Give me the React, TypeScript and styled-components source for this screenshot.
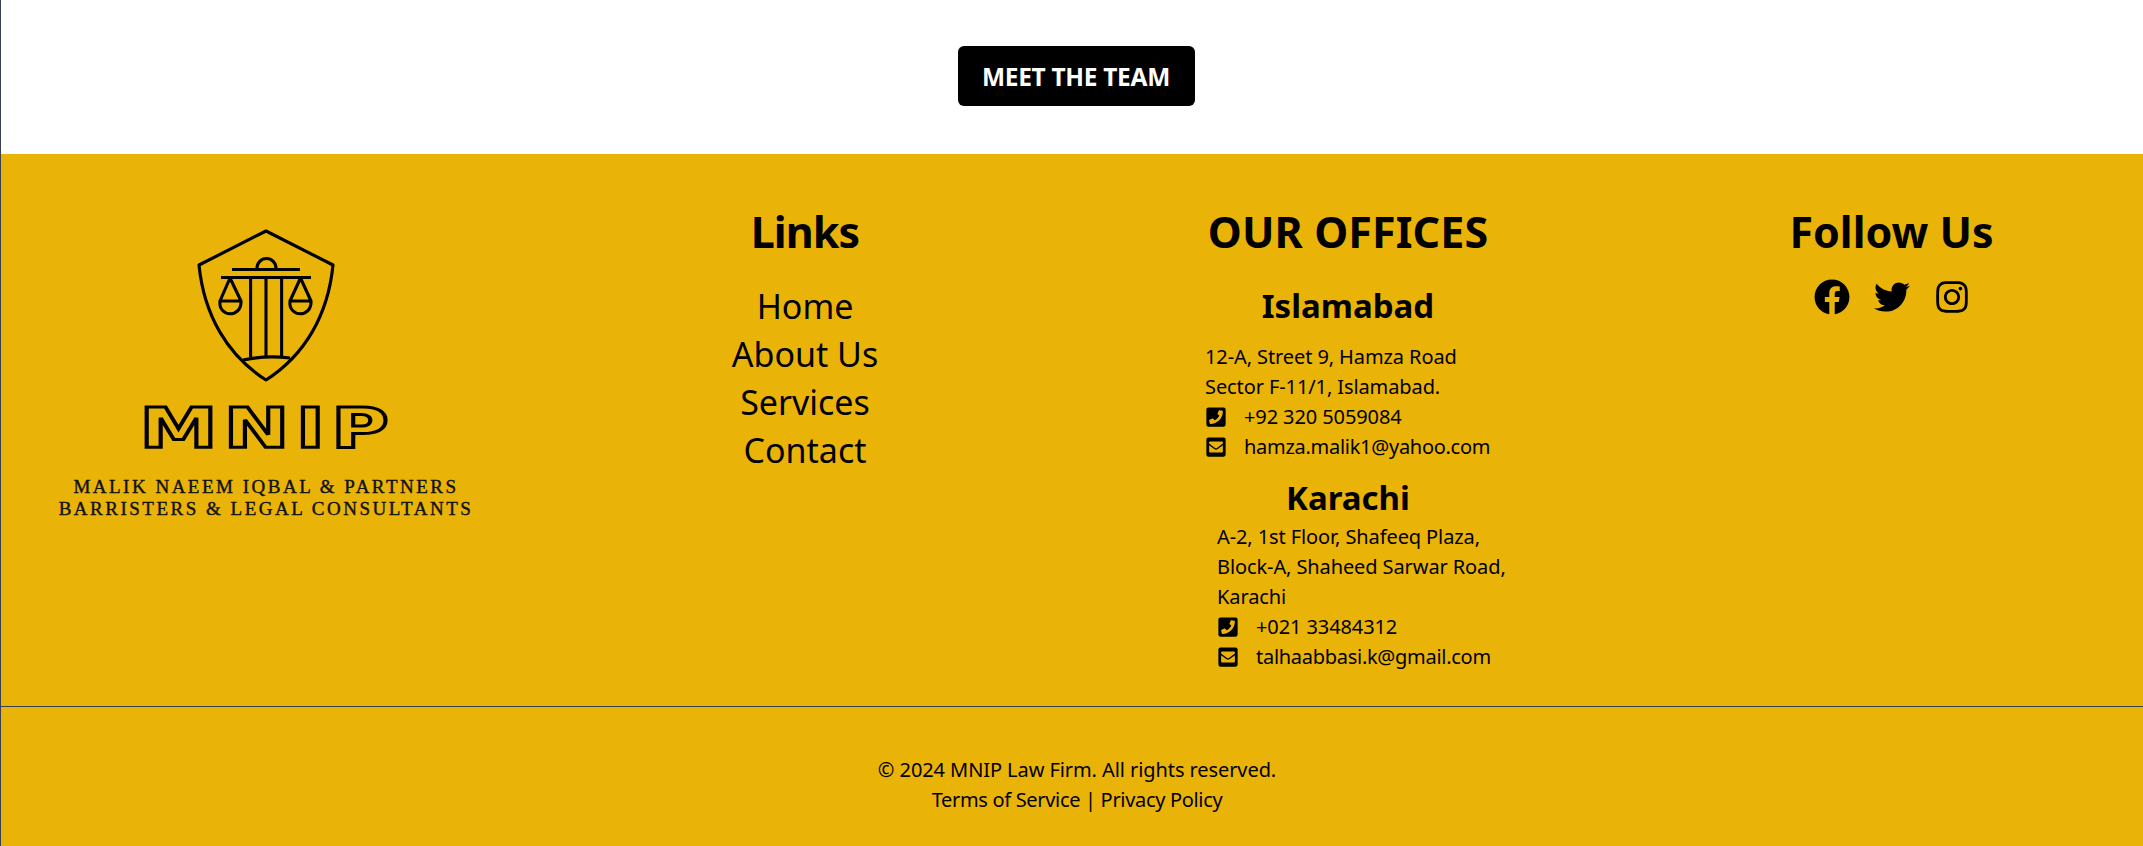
import React from "react";
import styled, { createGlobalStyle } from "styled-components";
import { FaFacebook, FaTwitter, FaInstagram, FaPhoneSquare, FaEnvelopeSquare } from "react-icons/fa";

const Global = createGlobalStyle`
  html, body { margin: 0; padding: 0; background: #fff; }
  body { font-family: "Noto Sans", "Open Sans", Arial, sans-serif; color: #000; }
  * { box-sizing: border-box; }
`;
const Page = styled.div`
  display: flex;
  flex-direction: column;
  border-left: 1px solid #374151;
  height: 846px;
  overflow: hidden;
`;
const TopBand = styled.section`
  display: flex;
  justify-content: center;
  padding: 46px 0 48px 8px;
  background: #fff;
`;
const TeamButton = styled.button`
  width: 237px;
  height: 60px;
  border: 0;
  border-radius: 6px;
  background: #000;
  color: #fff;
  font: 700 24.5px/32px "Noto Sans", sans-serif;
  letter-spacing: -0.3px;
  padding: 2px 0 0;
`;
const Footer = styled.footer`
  flex: 1;
  background: #eab308;
`;
const Columns = styled.div`
  display: grid;
  grid-template-columns: repeat(4, 500px);
  column-gap: 43px;
  padding: 54px 0 34px 11px;
`;
const Column = styled.div`
  display: flex;
  flex-direction: column;
  align-items: center;
`;
const BrandColumn = styled(Column)`
  padding: 12px 0 0 8px;
`;
const FollowColumn = styled(Column)`
  padding-left: 1px;
`;
const Wordmark = styled.div`
  font: 700 56px/46px "DejaVu Sans", sans-serif;
  color: transparent;
  -webkit-text-stroke: 3px #000;
  letter-spacing: 4.5px;
  margin: 15px 0 0 2px;
  transform: scaleX(1.4);
  white-space: nowrap;
`;
const BrandName = styled.div`
  font: 400 19px/22px "Liberation Serif", serif;
  -webkit-text-stroke: 0.4px #111;
  letter-spacing: 2.5px;
  text-align: center;
  color: #111;
  margin-top: 25px;
  white-space: nowrap;
`;
const Heading = styled.h2<{ $tracking: number }>`
  margin: 0 0 1px;
  font-size: 43px;
  line-height: 48px;
  font-weight: 700;
  letter-spacing: ${(p) => p.$tracking}px;
  white-space: nowrap;
`;
const LinkList = styled.nav`
  display: flex;
  flex-direction: column;
  align-items: center;
  margin-top: 25px;
`;
const NavLink = styled.a`
  font-size: 34px;
  line-height: 48px;
  color: #000;
`;
const OfficeName = styled.h3<{ $gapAbove: number; $gapBelow: number }>`
  margin: ${(p) => p.$gapAbove}px 0 ${(p) => p.$gapBelow}px;
  font-size: 33px;
  line-height: 40px;
  font-weight: 700;
  letter-spacing: 0;
`;
const OfficeBlock = styled.div<{ $inset: number }>`
  width: 300px;
  padding-left: ${(p) => p.$inset}px;
  font-size: 20px;
  line-height: 30px;
  letter-spacing: -0.1px;
  white-space: nowrap;
`;
const Contact = styled.div`
  display: flex;
  align-items: center;
  gap: 17px;
  svg { font-size: 22px; flex: none; }
`;
const EmailText = styled.span`
  letter-spacing: -0.28px;
`;
const Socials = styled.div`
  display: flex;
  align-items: center;
  gap: 24px;
  margin-top: 22px;
  font-size: 36px;
  color: #000;
  svg { display: block; }
`;
const Rule = styled.hr`
  margin: 0;
  border: 0;
  height: 1px;
  background: #374151;
`;
const Legal = styled.div`
  padding: 48px 0 0 10px;
  text-align: center;
  font-size: 20px;
  line-height: 30px;
  letter-spacing: -0.08px;
`;
const LegalLinks = styled.div`
  letter-spacing: -0.32px;
`;

const Shield = () => (
  <svg width="152" height="170" viewBox="20 0 152 170" fill="none" stroke="#000" strokeWidth="3.1" strokeLinejoin="round" aria-hidden="true">
    <path d="M96 11 L163 45 C158 95 135 135 96 160 C57 135 34 95 29 45 Z" />
    <path d="M62 49.5 H130 M87 48 A9.5 9.5 0 0 1 106 48" />
    <path d="M51 57.5 H141 M80.6 58 V137 M96 58 V137 M111.6 58 V137" />
    <path d="M73 140 Q96 135 120 138" />
    <path d="M60 58 L50 81 H71 Z M50 81 C48 98 72 98 71 81" />
    <path d="M130.5 58 L120 81 H141 Z M120 81 C118 98 142 98 141 81" />
  </svg>
);

export default function App() {
  return (
    <Page>
      <Global />
      <TopBand>
        <TeamButton>MEET THE TEAM</TeamButton>
      </TopBand>
      <Footer>
        <Columns>
          <BrandColumn>
            <Shield />
            <Wordmark>MNIP</Wordmark>
            <BrandName>
              MALIK NAEEM IQBAL &amp; PARTNERS
              <br />
              BARRISTERS &amp; LEGAL CONSULTANTS
            </BrandName>
          </BrandColumn>
          <Column>
            <Heading $tracking={-0.9}>Links</Heading>
            <LinkList>
              <NavLink>Home</NavLink>
              <NavLink>About Us</NavLink>
              <NavLink>Services</NavLink>
              <NavLink>Contact</NavLink>
            </LinkList>
          </Column>
          <Column>
            <Heading $tracking={0.1}>OUR OFFICES</Heading>
            <OfficeName $gapAbove={29} $gapBelow={16}>Islamabad</OfficeName>
            <OfficeBlock $inset={7}>
              12-A, Street 9, Hamza Road
              <br />
              Sector F-11/1, Islamabad.
              <Contact><FaPhoneSquare />+92 320 5059084</Contact>
              <Contact><FaEnvelopeSquare /><EmailText>hamza.malik1@yahoo.com</EmailText></Contact>
            </OfficeBlock>
            <OfficeName $gapAbove={16} $gapBelow={4}>Karachi</OfficeName>
            <OfficeBlock $inset={19}>
              A-2, 1st Floor, Shafeeq Plaza,
              <br />
              Block-A, Shaheed Sarwar Road,
              <br />
              Karachi
              <Contact><FaPhoneSquare />+021 33484312</Contact>
              <Contact><FaEnvelopeSquare /><EmailText>talhaabbasi.k@gmail.com</EmailText></Contact>
            </OfficeBlock>
          </Column>
          <FollowColumn>
            <Heading $tracking={0}>Follow Us</Heading>
            <Socials>
              <FaFacebook />
              <FaTwitter />
              <FaInstagram />
            </Socials>
          </FollowColumn>
        </Columns>
        <Rule />
        <Legal>
          © 2024 MNIP Law Firm. All rights reserved.
          <LegalLinks>Terms of Service | Privacy Policy</LegalLinks>
        </Legal>
      </Footer>
    </Page>
  );
}
